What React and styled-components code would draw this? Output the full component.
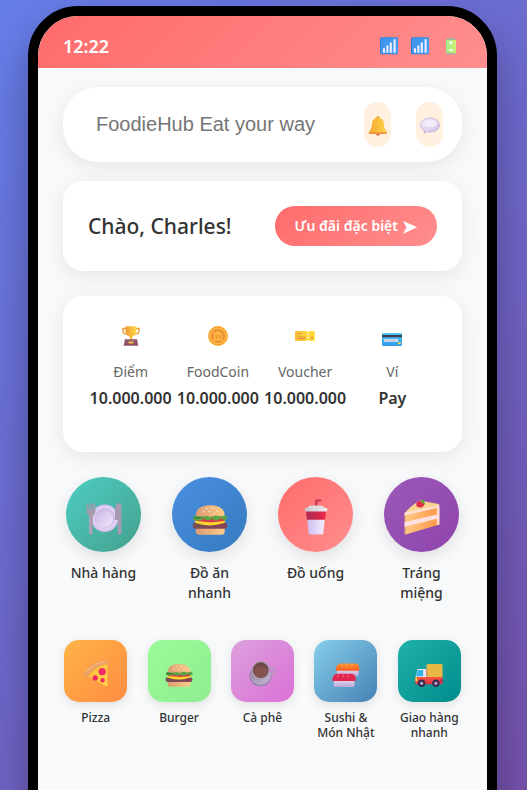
import React from "react";
import styled, { createGlobalStyle } from "styled-components";

const GlobalStyle = createGlobalStyle`
  *, *::before, *::after { box-sizing: border-box; }
  body { margin: 0; font-family: "Noto Sans", "Open Sans", sans-serif; color: #333; }
  button, input { font-family: inherit; color: inherit; }
  button { border: 0; padding: 0; background: none; cursor: pointer; }
  svg { display: block; flex: none; }
`;

const Page = styled.div`
  height: 100vh;
  overflow: hidden;
  padding: 6px 30px 0 28px;
  background: linear-gradient(135deg, #667eea 0%, #764ba2 100%) 0 0 / 100% 960px;
`;

const Phone = styled.div`
  min-height: 844px;
  border: 10px solid #000;
  border-radius: 50px;
  overflow: hidden;
  background: #f8f9fb;
  box-shadow: 0 20px 40px rgba(0, 0, 0, 0.3);
`;

const StatusBar = styled.header`
  display: flex;
  align-items: center;
  justify-content: space-between;
  padding: 17px 27px 9px 25px;
  background: linear-gradient(135deg, #ff6b6b, #ff8e8e);
  color: #fff;
  font-size: 18px;
  line-height: 26px;
  font-weight: 600;
`;

const StatusIcons = styled.div`
  display: flex;
  gap: 13px;
`;

const Content = styled.main`
  display: flex;
  flex-direction: column;
  padding: 19px 25px;
`;

const Card = styled.section`
  background: #fff;
  border-radius: ${(p) => p.$radius || 20}px;
  box-shadow: 0 5px 20px rgba(0, 0, 0, 0.08);
`;

const SearchCard = styled(Card)`
  display: flex;
  align-items: center;
  gap: 25px;
  padding: 15px 19px 15px 33px;
`;

const SearchInput = styled.input`
  flex: 1;
  min-width: 0;
  padding: 0;
  border: 0;
  outline: 0;
  background: transparent;
  font-family: "Liberation Sans", Arial, sans-serif;
  font-size: 20px;
  &::placeholder { color: #757575; opacity: 1; }
`;

const PillButton = styled.button`
  display: grid;
  place-items: center;
  width: 27px;
  height: 45px;
  padding-top: 3px;
  border-radius: 14px;
  background: #fff0e0;
`;

const GreetingCard = styled(Card)`
  display: flex;
  align-items: center;
  justify-content: space-between;
  margin-top: 19px;
  padding: 25px;
`;

const Greeting = styled.h1`
  margin: 0;
  font-size: 21px;
  line-height: 30px;
  font-weight: 500;
  white-space: nowrap;
`;

const OfferButton = styled.button`
  display: flex;
  align-items: center;
  gap: 4px;
  padding: 0 20px;
  border-radius: 20px;
  background: linear-gradient(135deg, #ff6b6b, #ff8e8e);
  color: #fff;
  font-size: 14px;
  line-height: 40px;
  font-weight: 600;
  white-space: nowrap;
`;

const OfferArrow = styled.span`
  font-size: 18px;
`;

const StatsCard = styled(Card)`
  display: grid;
  grid-template-columns: repeat(4, minmax(0, 1fr));
  margin-top: 25px;
  padding: 30px 26px 42px 24px;
`;

const Stat = styled.div`
  display: flex;
  flex-direction: column;
  align-items: center;
  white-space: nowrap;
`;

const StatLabel = styled.span`
  margin-top: 14px;
  color: #666;
  font-size: 14px;
  line-height: 24px;
  font-weight: 400;
`;

const StatValue = styled.strong`
  margin-top: 2px;
  font-size: 16px;
  line-height: 24px;
  font-weight: 600;
`;

const Categories = styled.nav`
  display: grid;
  grid-template-columns: repeat(4, minmax(0, 1fr));
  gap: 25px;
  margin-top: 25px;
`;

const Category = styled.button`
  display: flex;
  flex-direction: column;
  align-items: center;
  font-size: 14px;
  line-height: 20px;
  font-weight: 500;
`;

const Circle = styled.span`
  display: grid;
  place-items: center;
  width: 75px;
  height: 75px;
  margin-bottom: 11px;
  padding-top: 4px;
  border-radius: 50%;
  background: ${(p) => p.$fill};
  box-shadow: 0 5px 15px rgba(0, 0, 0, 0.1);
`;

const Shortcuts = styled.nav`
  display: grid;
  grid-template-columns: repeat(5, minmax(0, 1fr));
  gap: 18px;
  margin-top: 37px;
`;

const Shortcut = styled.button`
  display: flex;
  flex-direction: column;
  align-items: center;
  font-size: 12px;
  line-height: 15px;
  font-weight: 500;
`;

const Tile = styled.span`
  display: grid;
  place-items: center;
  width: 63px;
  height: 62px;
  margin-bottom: 8px;
  padding-top: 4px;
  border-radius: 15px;
  background: ${(p) => p.$fill};
  box-shadow: 0 3px 10px rgba(0, 0, 0, 0.1);
`;

function Grad({ id, from, to, x2 = 1, y2 = 1 }) {
  return (
    <linearGradient id={id} x1="0" y1="0" x2={x2} y2={y2}>
      <stop stopColor={from} />
      <stop offset="1" stopColor={to} />
    </linearGradient>
  );
}

const SignalIcon = () => (
  <svg width="18" height="18" viewBox="0 0 18 18" aria-hidden="true">
    <defs><Grad id="sig" from="#3f8fe8" to="#4aa6ff" /></defs>
    <rect y="0.3" width="18" height="17" rx="1.5" fill="#3479cf" />
    <rect x="0.8" y="0.6" width="17" height="16" rx="1.2" fill="url(#sig)" />
    <path d="M3 11.3h2v4.4H3zM6.4 8.4h2v7.3h-2zM9.8 5.4h2v10.3h-2zM13.6 2.2h2v13.5h-2z" fill="#f4efff" />
  </svg>
);

const BatteryIcon = () => (
  <svg width="18" height="18" viewBox="0 0 18 18" aria-hidden="true">
    <defs><Grad id="bat" from="#9bed91" to="#d0ef72" y2={0} /></defs>
    <path d="M7 .4h4v2H7z" fill="#a99caa" />
    <rect x="4" y="1.4" width="10" height="16" rx="1.2" fill="#a7b59a" />
    <path d="M4 3h10v12.7H4z" fill="url(#bat)" />
    <path d="M7 5.7h3.500M8.750 4v3.500M7 13h3.500" stroke="#fff" strokeWidth="1.3" />
  </svg>
);

const BellIcon = () => (
  <svg width="20" height="20" viewBox="0 0 20 20" aria-hidden="true">
    <defs><Grad id="bell" from="#f5a52f" to="#ffd84b" y2={0} /></defs>
    <circle cx="10" cy="1.8" r="1.7" fill="#ee9d3b" />
    <circle cx="10" cy="17.8" r="2" fill="#df734b" />
    <path d="M10 1.8c4.2 0 5.8 3 6 6.5.2 3.5.7 5 2.8 7.2.9 1 .5 2.4-.8 2.4H2c-1.3 0-1.7-1.4-.8-2.4C3.300 13.300 3.800 11.800 4 8.300 4.200 4.800 5.800 1.800 10 1.800z" fill="url(#bell)" />
    <path d="M1.200 16.200h17.600c.1.9-.2 1.700-1 1.700H2.200c-.8 0-1.100-.8-1-1.700z" fill="#f19340" />
  </svg>
);

const ChatIcon = () => (
  <svg width="20" height="20" viewBox="0 0 20 20" aria-hidden="true">
    <defs><Grad id="chat" from="#f7f1fc" to="#cdbbe5" /></defs>
    <path d="M10 2.200c5.300 0 9.500 3 9.500 6.900s-4.200 6.900-9.500 6.900c-1.200 0-2.300-.1-3.300-.4L4.200 17.500l.2-3C2 13.200.5 11.300.5 9.100c0-3.900 4.200-6.900 9.500-6.900z" fill="url(#chat)" stroke="#b9a5d5" strokeWidth="0.7" />
    <ellipse cx="10.500" cy="7.500" rx="6.500" ry="3.800" fill="#f3edf9" />
  </svg>
);

const TrophyIcon = () => (
  <svg width="20" height="20" viewBox="0 0 20 20" aria-hidden="true">
    <defs><Grad id="tro" from="#f09a30" to="#ffda4d" y2={0} /></defs>
    <path d="M5 2.500H2v2.200c0 2 1.400 3.300 4 3.300M15 2.500h3v2.200c0 2-1.400 3.300-4 3.300" fill="none" stroke="#e99c3e" strokeWidth="1.400" />
    <path d="M4.500.3h11v5.200c0 3-2 4.700-4.300 5.200v2.500H8.800v-2.500C6.500 10.200 4.500 8.500 4.500 5.500z" fill="url(#tro)" />
    <path d="M4 13.200h12l1.300 6.500H2.700z" fill="#8d4f6a" />
    <path d="M3.600 14.200h12.800" stroke="#a86b79" />
    <path d="M7.500 15.500h5v2h-5z" fill="#f8bd43" />
  </svg>
);

const CoinIcon = () => (
  <svg width="20" height="20" viewBox="0 0 20 20" aria-hidden="true">
    <circle cx="10" cy="10" r="9.900" fill="#f7a42d" />
    <circle cx="10" cy="10" r="8.300" fill="#ffc04c" />
    <circle cx="10" cy="10" r="7.200" fill="#ed9139" />
    <path d="M5.500 7.500 10 5l4.500 2.500v1h-9zM6.300 8.500h1.300v4.500H6.300zM9.300 8.500h1.400v4.500H9.300zM12.400 8.500h1.300v4.500h-1.300zM5.300 13h9.400v1.500H5.300z" fill="#ffbe42" />
  </svg>
);

const TicketIcon = () => (
  <svg width="20" height="20" viewBox="0 0 20 20" aria-hidden="true">
    <defs><Grad id="tick" from="#f9bd35" to="#ffe548" y2={0} /></defs>
    <rect y="5" width="20" height="10" rx="0.800" fill="url(#tick)" />
    <path d="M13 5v10" stroke="#fff" strokeWidth="1.700" strokeDasharray="1 2" />
    <path d="M2.500 7.500h4M2.500 11h8" stroke="#e58e36" strokeWidth="0.900" />
    <path d="M2.500 12h8v1.200h-8zM16 10.500h2v2.700h-2z" fill="#e99348" />
    <path d="M15.800 7.500h2" stroke="#f4bd39" />
  </svg>
);

const BankCardIcon = () => (
  <svg width="20" height="20" viewBox="0 0 20 20" aria-hidden="true">
    <defs><Grad id="bank" from="#48cbee" to="#329bea" x2={0} /></defs>
    <rect y="7" width="20" height="13" rx="1.300" fill="url(#bank)" />
    <path d="M0 9h20v2.200H0z" fill="#493752" />
    <path d="M2 13.100h14v2.700H2z" fill="#e9e2f2" />
    <path d="M2.800 14.500h11" stroke="#b9aac8" strokeWidth="0.700" />
    <rect x="16" y="16" width="2.600" height="2.300" rx="0.600" fill="#ffd33b" />
  </svg>
);

const PlateIcon = () => (
  <svg width="36" height="36" viewBox="0 0 36 36" aria-hidden="true">
    <defs><Grad id="plate" from="#c9b5e5" to="#f1e9fb" /></defs>
    <circle cx="18.800" cy="19.200" r="13.700" fill="#d3c1ec" />
    <circle cx="18.800" cy="19" r="12.300" fill="#dccff1" />
    <circle cx="18.600" cy="19" r="9.600" fill="#c8b5e4" />
    <circle cx="18.400" cy="19.500" r="8.700" fill="url(#plate)" />
    <path d="M.7 4.500h1.600v6h1.300v-6h1.800v6h1.200v-6h1.300v6h.5v-6h1v8.200c0 2-1.300 3.400-2.700 3.800v18c0 1.300-3.500 1.300-3.500 0v-18C1.700 16.100.7 14.700.7 12.700z" fill="#a79aad" />
    <path d="M3.900 16v19M32.500 20v15" stroke="#c0b3cc" strokeWidth="0.800" />
    <path d="M35.400 5.200v29.200c0 1.500-3.500 1.500-3.500 0V21h-3v-9c0-5 1.700-7.800 4.700-7.800 1.200 0 1.800.3 1.800 1z" fill="#a79ab1" />
  </svg>
);

const BurgerIcon = ({ size }) => (
  <svg width={size} height={size} viewBox="0 0 36 36" aria-hidden="true">
    <defs>
      <Grad id="bun" from="#dc9b75" to="#ffcc87" y2={0} />
      <Grad id="pat" from="#755052" to="#874156" y2={0} />
    </defs>
    <path d="M3.700 28h29v4.500c0 2-1 3.200-3 3.200H6.700c-2 0-3-1.200-3-3.200z" fill="url(#bun)" />
    <rect x="0.700" y="23.500" width="34.500" height="6.200" rx="3" fill="url(#pat)" />
    <path d="M3 21.500h30c1 2.500-2 3-5 3.500-6 1.800-14 2-20 0-4-.5-6-1.500-5-3.500z" fill="#ffd32c" />
    <path d="M3.500 19h29c1.500 2-1 3.600-3.500 3.300-6 1.200-16 1-21 0-3.500.2-6-1.300-4.500-3.300z" fill="#df3450" />
    <path d="M3.500 16.200h29c2 .6 4 2.500 2.500 4-2.500 1.300-4.500.4-6.500-.6-3 2.800-6 2.700-8.500.2-3 2.300-6 2-8.500-.3-2.500 2.600-6 2.500-9.500 1.500-2-1.500-.7-3.600 1.500-4.800z" fill="#5da344" />
    <path d="M2 18.500c3 1 6 .5 8-1" stroke="#397b43" fill="none" strokeWidth="1.500" />
    <path d="M3.800 16.500C3.800 10 9 6.300 18.200 6.300S32.700 10 32.700 16.500c-4 1.500-7 .2-9.500 0-4 2-6.500 1-9 .2-3.500 1.300-7 1-10.400-.2z" fill="url(#bun)" />
    <g fill="#fff1ce">
      <circle cx="14.500" cy="9.500" r="0.800" /><circle cx="20.500" cy="9.500" r="0.800" />
      <circle cx="11.500" cy="12.500" r="0.800" /><circle cx="17.500" cy="12.500" r="0.800" />
      <circle cx="25" cy="12" r="0.800" /><circle cx="22" cy="14.300" r="0.700" />
    </g>
  </svg>
);

const DrinkIcon = () => (
  <svg width="36" height="36" viewBox="0 0 36 36" aria-hidden="true">
    <defs>
      <Grad id="cup" from="#cbbdf0" to="#f5edff" y2={0} />
      <Grad id="cupr" from="#ab294f" to="#ee264b" y2={0} />
      <Grad id="lid" from="#c5c1c9" to="#f4f1f5" y2={0} />
    </defs>
    <path d="M18.300 8V1.500h5" fill="none" stroke="#ca3551" strokeWidth="2.200" />
    <path d="M9.200 19h17.600l-1.400 15c-.1 1-.8 1.600-2 1.600H12.600c-1.200 0-1.900-.6-2-1.600z" fill="url(#cup)" />
    <path d="M8 12h20l-1 8.700H9z" fill="url(#cupr)" />
    <path d="M9.500 9.500c.5-2 2-3 4-3h9c2 0 3.500 1 4 3z" fill="#dedbe1" />
    <rect x="6.800" y="8.800" width="22.600" height="3.700" rx="1.500" fill="url(#lid)" />
  </svg>
);

const CakeIcon = () => (
  <svg width="36" height="36" viewBox="0 0 36 36" aria-hidden="true">
    <defs><Grad id="cake" from="#ffc985" to="#ff9646" y2={0} /></defs>
    <path d="M.6 14.200 34 7l1.500 18.500L1.500 35.600c-.6 0-.9-.4-.9-1z" fill="url(#cake)" />
    <path d="M.6 14.200C5 9 10 4.500 16 1.500L34.500 5c1 .3 1.200 1.300.2 1.800z" fill="#fbd392" />
    <path d="M.6 13.500 34 6.500l1.300-.5c.4 5 .4 13 0 19.500l-2.500.8V9L.6 16.500z" fill="#ffe0d3" />
    <path d="M.6 23.200 33 15.500v4.200L.6 27.700z" fill="#ffe2df" />
    <path d="M1.400 16.500v6.300M1.400 28v6.500" stroke="#d99a69" strokeWidth="0.800" />
    <path d="M13 3.200c2-2 6.500-1.500 7.300 1.300.4 2.400-2 4.400-4.800 4-3-.2-4.200-3.200-2.500-5.300z" fill="#e22d46" />
    <path d="m16.500.5 2.400.2 1.700 2 .4 3.200-1.700-1.700-2.200-.2.500-1.700z" fill="#60a93b" />
  </svg>
);

const PizzaIcon = () => (
  <svg width="28" height="28" viewBox="0 0 28 28" aria-hidden="true">
    <defs><Grad id="piz" from="#ffb537" to="#ffd949" /></defs>
    <path d="M4.500 16.200C10 9 16 5 25.300 3.500v22.700c0 .9-.6 1.200-1.400.9z" fill="url(#piz)" />
    <path d="M1.900 14C7 6.500 14.500 1.600 24 .9c1 0 1.500.5 1.500 1.500v2.500C17 6.300 11 10.200 6.500 17c-.7 1-1.700 1.300-2.600.6l-1.500-1.200c-.8-.7-1-1.500-.5-2.400z" fill="#eaa060" />
    <path d="M3.500 14.200C9 7 16 3.200 24.500 2.700" fill="none" stroke="#f3bc82" strokeWidth="1.200" />
    <g fill="#f3286b"><circle cx="20.200" cy="12.700" r="3.600" /><circle cx="13.200" cy="18.900" r="2.600" /><circle cx="20.600" cy="21.200" r="2.200" /></g>
  </svg>
);

const CoffeeIcon = () => (
  <svg width="28" height="28" viewBox="0 0 28 28" aria-hidden="true">
    <defs><Grad id="cof" from="#877c8c" to="#c8b7df" /></defs>
    <circle cx="12.500" cy="16.500" r="11" fill="#9587a8" />
    <circle cx="12.900" cy="16" r="10" fill="#baa6cf" />
    <circle cx="23" cy="12" r="3.700" fill="none" stroke="#ad9ab9" strokeWidth="1.500" />
    <circle cx="12.700" cy="14.500" r="9.800" fill="url(#cof)" />
    <circle cx="12.700" cy="11.200" r="9.200" fill="#afa0b8" />
    <circle cx="12.700" cy="11.200" r="7.900" fill="#71494b" />
    <ellipse cx="12.900" cy="13" rx="6.500" ry="5.500" fill="#85544e" />
  </svg>
);

const SushiIcon = () => (
  <svg width="28" height="28" viewBox="0 0 28 28" aria-hidden="true">
    <defs>
      <Grad id="rice" from="#e9dcf5" to="#bba9d9" x2={0} />
      <Grad id="sal" from="#ff9331" to="#ff5b23" x2={0} />
    </defs>
    <path d="M5 10h21.500v5.500c0 1-.6 1.700-1.800 1.700H6c-1 0-1-.7-1-1.700z" fill="url(#rice)" />
    <path d="M3.800 10.500C4.200 6.500 6 4.500 9 4.500h14c3 0 4.300 2 4.300 6 0 1-1 1.600-2 1.300H5c-1 .1-1.400-.3-1.200-1.300z" fill="url(#sal)" />
    <path d="M10 5v3M15 5v3M20 5v3" stroke="#ffad4d" />
    <path d="M1.800 20h20.700v6.200c0 1-.6 1.700-1.800 1.700H3.600c-1.200 0-1.800-.7-1.800-1.700z" fill="url(#rice)" />
    <path d="M.2 20.800c.6-3.800 2.400-6 5.300-6h14c2.800 0 4.300 2 4.400 6 0 1-.8 1.500-1.800 1.300H1.600c-1 .1-1.500-.3-1.400-1.300z" fill="#df264f" />
    <path d="M6 15.500v3M11 15.500v3M16 15.500v3" stroke="#ff6670" />
  </svg>
);

const TruckIcon = () => (
  <svg width="28" height="28" viewBox="0 0 28 28" aria-hidden="true">
    <defs><Grad id="tru" from="#ff593c" to="#e32e48" x2={0} /></defs>
    <path d="M2.700 10h9.500v9H.3z" fill="#eee4f5" />
    <path d="M3 10.900h5.200v6.300H1z" fill="#31b3ec" />
    <rect x="11.500" y="5" width="16" height="13.500" rx="1.500" fill="#e9b744" />
    <path d="M.3 18h27.200v6c0 .8-.5 1.200-1.200 1.200H1.500c-.7 0-1.200-.4-1.200-1.200z" fill="url(#tru)" />
    <path d="M11.700 10v14" stroke="#bf5361" strokeWidth="0.700" />
    <path d="M.5 18.500h1.700v4H.5z" fill="#ffdb4b" />
    <path d="M25.700 20h1.800v3h-1.800z" fill="#a12361" />
    <g fill="#3b2c4e"><circle cx="6.600" cy="24.300" r="3.700" /><circle cx="20.900" cy="24.300" r="3.700" /></g>
    <g fill="#c1b2db"><circle cx="6.600" cy="24.300" r="1.500" /><circle cx="20.900" cy="24.300" r="1.500" /></g>
  </svg>
);

const stats = [
  { label: "Điểm", value: "10.000.000", icon: <TrophyIcon /> },
  { label: "FoodCoin", value: "10.000.000", icon: <CoinIcon /> },
  { label: "Voucher", value: "10.000.000", icon: <TicketIcon /> },
  { label: "Ví", value: "Pay", icon: <BankCardIcon /> },
];

const categories = [
  { label: "Nhà hàng", fill: "linear-gradient(135deg, #4ecdc4, #44a08d)", icon: <PlateIcon /> },
  { label: "Đồ ăn nhanh", fill: "linear-gradient(135deg, #4a90e2, #357abd)", icon: <BurgerIcon size={36} /> },
  { label: "Đồ uống", fill: "linear-gradient(135deg, #ff6b6b, #ff8e8e)", icon: <DrinkIcon /> },
  { label: "Tráng miệng", fill: "linear-gradient(135deg, #9b59b6, #8e44ad)", icon: <CakeIcon /> },
];

const shortcuts = [
  { label: "Pizza", fill: "linear-gradient(135deg, #ffb347, #ff8c42)", icon: <PizzaIcon /> },
  { label: "Burger", fill: "linear-gradient(135deg, #98fb98, #90ee90)", icon: <BurgerIcon size={28} /> },
  { label: "Cà phê", fill: "linear-gradient(135deg, #dda0dd, #da70d6)", icon: <CoffeeIcon /> },
  { label: "Sushi & Món Nhật", fill: "linear-gradient(135deg, #87ceeb, #4682b4)", icon: <SushiIcon /> },
  { label: "Giao hàng nhanh", fill: "linear-gradient(135deg, #20b2aa, #008b8b)", icon: <TruckIcon /> },
];

export default function App() {
  return (
    <>
      <GlobalStyle />
      <Page lang="vi">
        <Phone>
          <StatusBar>
            <time>12:22</time>
            <StatusIcons>
              <SignalIcon />
              <SignalIcon />
              <BatteryIcon />
            </StatusIcons>
          </StatusBar>
          <Content>
            <SearchCard $radius={35}>
              <SearchInput type="text" aria-label="FoodieHub" placeholder="FoodieHub Eat your way" />
              <PillButton type="button" aria-label="Thông báo"><BellIcon /></PillButton>
              <PillButton type="button" aria-label="Tin nhắn"><ChatIcon /></PillButton>
            </SearchCard>
            <GreetingCard>
              <Greeting>Chào, Charles!</Greeting>
              <OfferButton type="button">
                Ưu đãi đặc biệt <OfferArrow>➤</OfferArrow>
              </OfferButton>
            </GreetingCard>
            <StatsCard>
              {stats.map((s) => (
                <Stat key={s.label}>
                  {s.icon}
                  <StatLabel>{s.label}</StatLabel>
                  <StatValue>{s.value}</StatValue>
                </Stat>
              ))}
            </StatsCard>
            <Categories>
              {categories.map((c) => (
                <Category type="button" key={c.label}>
                  <Circle $fill={c.fill}>{c.icon}</Circle>
                  {c.label}
                </Category>
              ))}
            </Categories>
            <Shortcuts>
              {shortcuts.map((s) => (
                <Shortcut type="button" key={s.label}>
                  <Tile $fill={s.fill}>{s.icon}</Tile>
                  {s.label}
                </Shortcut>
              ))}
            </Shortcuts>
          </Content>
        </Phone>
      </Page>
    </>
  );
}
